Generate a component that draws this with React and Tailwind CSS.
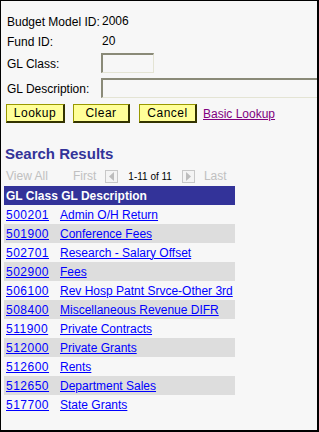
const rows = [
  ['500201', 'Admin O/H Return'],
  ['501900', 'Conference Fees'],
  ['502701', 'Research - Salary Offset'],
  ['502900', 'Fees'],
  ['506100', 'Rev Hosp Patnt Srvce-Other 3rd'],
  ['508400', 'Miscellaneous Revenue DIFR'],
  ['511900', 'Private Contracts'],
  ['512000', 'Private Grants'],
  ['512600', 'Rents'],
  ['512650', 'Department Sales'],
  ['517700', 'State Grants'],
]

function Btn({ children, className }) {
  return (
    <button
      className={
        'h-[19px] bg-[#ffff99] border-t border-l border-b-2 border-r-2 border-t-[#999900] border-l-[#999900] border-b-[#333300] border-r-[#333300] text-black text-[12px] leading-none tracking-[0.5px] ' +
        className
      }
    >
      {children}
    </button>
  )
}

function Arrow({ dir }) {
  return (
    <span className="w-[13px] h-[13px] border border-[#c8c8c8] flex items-center justify-center bg-[#f4f4f4]">
      <svg width="7" height="9" viewBox="0 0 7 9">
        {dir === 'left' ? (
          <polygon points="6,0 6,9 1,4.5" fill="#bdbdbd" />
        ) : (
          <polygon points="1,0 1,9 6,4.5" fill="#bdbdbd" />
        )}
      </svg>
    </span>
  )
}

export default function App() {
  return (
    <div className="w-[319px] h-[432px] overflow-hidden bg-[#f7f7f7] border-t border-l border-r-2 border-b-2 border-black font-['Liberation_Sans',Arial,sans-serif] text-[12px] text-black">
      {/* criteria */}
      <div className="pt-[11px]">
        <div className="flex items-center h-[19px]">
          <span className="w-[101px] pl-[6px] shrink-0">Budget Model ID:</span>
          <span className="-mt-[2px]">2006</span>
        </div>
        <div className="flex items-center h-[20px] mt-[1px]">
          <span className="w-[101px] pl-[6px] shrink-0">Fund ID:</span>
          <span className="-mt-[3px]">20</span>
        </div>
        <div className="flex items-center h-[20px] mt-[1px]">
          <span className="w-[100px] pl-[6px] shrink-0 mt-[2px]">GL Class:</span>
          <div className="w-[53px] h-[20px] border-t-2 border-l-2 border-b border-r border-t-[#8a8a78] border-l-[#8a8a78] border-b-[#e4e4d4] border-r-[#e4e4d4]" />
        </div>
        <div className="flex items-center h-[20px] mt-[5px]">
          <span className="w-[100px] pl-[6px] shrink-0 mt-[2px]">GL Description:</span>
          <div className="w-[240px] shrink-0 h-[20px] border-t-2 border-l-2 border-b border-t-[#8a8a78] border-l-[#8a8a78] border-b-[#e4e4d4]" />
        </div>
        <div className="flex items-center h-[19px] mt-[6px] pl-[5px]">
          <Btn className="w-[59px]">Lookup</Btn>
          <Btn className="w-[57px] ml-[8px]">Clear</Btn>
          <Btn className="w-[58px] ml-[9px]">Cancel</Btn>
          <a href="#" className="ml-[6px] text-[#800080] underline">Basic Lookup</a>
        </div>
      </div>

      {/* results */}
      <div className="mt-[22px] pl-[4px] text-[15px] font-bold text-[#333399] leading-[18px]">Search Results</div>
      <div className="flex items-center h-[14px] mt-[6px] text-[#c0c0c0]">
        <span className="pl-[5px] w-[72px]">View All</span>
        <span>First</span>
        <span className="ml-[9px]"><Arrow dir="left" /></span>
        <span className="ml-[10px] text-black text-[10px]">1-11 of 11</span>
        <span className="ml-[10px]"><Arrow dir="right" /></span>
        <span className="ml-[9px]">Last</span>
      </div>
      <div className="mt-[3px] ml-[3px] w-[231px]">
        <div className="h-[19px] bg-[#333399] text-white font-bold flex items-center pl-[2px]">
          GL Class GL Description
        </div>
        {rows.map(([code, desc], i) => (
          <div
            key={code}
            className={'h-[19px] flex items-center ' + (i % 2 ? 'bg-[#dddddd]' : 'bg-[#f7f7f7]')}
          >
            <a href="#" className="w-[56px] shrink-0 pl-[2px] text-[#0000ff] underline tracking-[0.5px]">{code}</a>
            <a href="#" className="text-[#0000ff] underline whitespace-nowrap">{desc}</a>
          </div>
        ))}
      </div>
    </div>
  )
}
